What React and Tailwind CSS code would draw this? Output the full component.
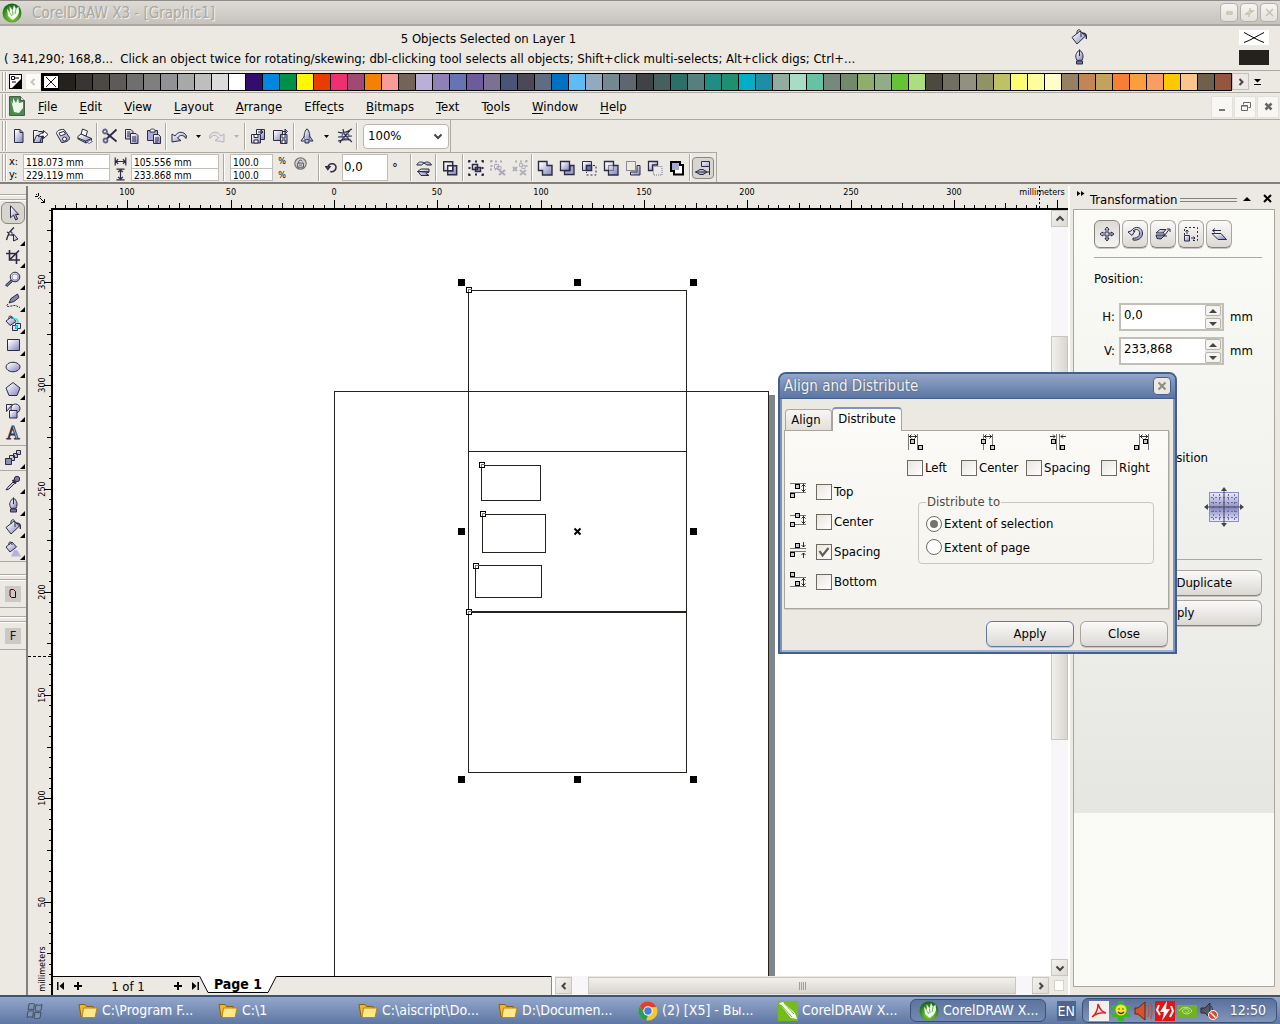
import { useState } from "react";

const palette = [
  "#25221e", "#3a3532", "#4c4845", "#5e5a58", "#6f6f6d", "#7f807e", "#919295", "#a8a8a6", "#bebebc", "#dadbda",
  "#ffffff", "#330c6f", "#0087e0", "#009148", "#fff800", "#eb3c00", "#f02e72", "#a14974", "#f48200", "#f99c97",
  "#736459", "#bab0d7", "#9080b5", "#6674b3", "#6f5a9d", "#7b7095", "#4a5477", "#4d4858", "#5f6c84", "#0072c4",
  "#5dbcf3", "#91aabf", "#748892", "#5e676f", "#3f4246", "#45605f", "#2a7069", "#577f7e", "#1f8d83", "#1e9070",
  "#00aec6", "#208ea2", "#91ad9f", "#a8dcc6", "#65c3a3", "#758a7c", "#73896b", "#8fad6b", "#90ae83", "#66c337",
  "#aade7f", "#4d493f", "#716f62", "#929180", "#919265", "#c0c166", "#fdfd71", "#fdfd9b", "#fffecb", "#967f62",
  "#c38554", "#c1a35e", "#f67e35", "#fa9f3c", "#f89e62", "#fec800", "#fcc58c", "#6f604b", "#955640",
];

const menus = [
  ["", "F", "ile"], ["", "E", "dit"], ["", "V", "iew"], ["", "L", "ayout"], ["", "A", "rrange"], ["Effe", "c", "ts"],
  ["", "B", "itmaps"], ["", "T", "ext"], ["T", "o", "ols"], ["", "W", "indow"], ["", "H", "elp"],
];

const INK = "#2b2b44";
const LAV = "url(#lav)";

// Small 16x16 glyphs used by the toolbars, toolbox and docker
const glyphs = {
  newDoc: <path d="M3.500 1.500h5.500l3 3v10h-8.500zM9 1.500v3h3" fill={LAV} stroke={INK} />,
  open: (
    <g fill={LAV} stroke={INK}>
      <path d="M.5 2.500h4l1 1h4v11h-9z" />
      <path d="M.5 14.500l3-7h5.500l-2 7z" />
      <path d="M5.500 9c1-3 2-4 5-4v-2.500l4.500 4-4.500 4V8c-2 0-3 .5-5 1z" fill="#fff" />
    </g>
  ),
  save: (
    <g fill={LAV} stroke={INK}>
      <path d="M1.500 5.500C1.500 3 5 1 9 1.500l5.500 8c.5 3-4 5-8 5z" />
      <path d="M4 5l5-1.500 1.500 2.500-5 2z" fill="#fff" />
      <circle cx="9.500" cy="11" r="2" fill="#fff" />
    </g>
  ),
  print: (
    <g fill={LAV} stroke={INK}>
      <path d="M4 6.500L5.500 1l5 2L9 8z" fill="#fff" />
      <path d="M.8 8.500L4 6l10.500 4.500v2L9 15l-8-4z" />
      <path d="M1 10l7.500 3 6-2.500M8.500 13v2" fill="none" />
      <path d="M10 14l2 1.500 3.500-2-2-1.500z" fill="#fff" stroke="#66668c" />
    </g>
  ),
  cut: (
    <g fill="none" stroke={INK} strokeWidth="1.800">
      <path d="M14.500 1.500L4.500 11M5 5.500l9.500 8" />
      <circle cx="3" cy="3.500" r="2" stroke="#62628c" />
      <circle cx="3.500" cy="12.500" r="2" stroke="#62628c" />
    </g>
  ),
  copy: (
    <g fill={LAV} stroke={INK}>
      <path d="M1.500 1.500h5.500l2 2v7.500h-7.500z" />
      <path d="M6.500 5.500h5.500l2 2v8h-7.500z" />
      <path d="M8 9h4M8 11h4M8 13h4M3 4h3M3 6h3M3 8h3" />
    </g>
  ),
  paste: (
    <g fill={LAV} stroke={INK}>
      <path d="M1.500 2.500h10v10h-10z" fill="#a9a9dc" />
      <path d="M4 2.500c0-2 5-2 5 0v1.500h-5z" fill="#fff" />
      <path d="M7.500 6.500h5l2 2v7h-7z" />
      <path d="M9 10h4M9 12h4M9 14h3" />
    </g>
  ),
  undo: <path d="M1 14v-8l3 2c3-5 9-5 11.500 0l-.5 2.500c-2.500-4-6-4-8.500-.5L10 12.500z" fill={LAV} stroke={INK} />,
  redo: <path d="M15 14v-8l-3 2C9 3 3 3 .5 8l.5 2.500c2.500-4 6-4 8.500-.5L6 12.500z" fill="#e4e3ea" stroke="#b5b3b8" />,
  import: (
    <g fill={LAV} stroke={INK}>
      <path d="M6.500 1.500h8v10h-8z" />
      <path d="M1.500 6.500h9v8.500h-9z" />
      <path d="M4 6.500h4v3h-4zM4 12h4v3h-4z" fill="#fff" />
      <path d="M8 4h4M11 2v4l2-2z" />
    </g>
  ),
  export: (
    <g fill={LAV} stroke={INK}>
      <path d="M1.500 2.500h9v10h-9z" />
      <path d="M8.500 6.500h6.500v9h-6.500z" />
      <path d="M10 7v3h3v-3M10 15v-3h3v3" fill="#fff" />
      <path d="M10 3.500h4M13 1v5l2.500-2.500z" />
    </g>
  ),
  launcher: (
    <g fill={LAV} stroke={INK}>
      <path d="M8 .8c3 3 3 6 2.500 11h-5C5 7 5 4 8 .8z" />
      <path d="M5.500 8L2 13h3.500M10.500 8L14 13h-3.500M6 12v3h4v-3" />
    </g>
  ),
  web: (
    <g fill="none" stroke={INK} strokeWidth="1.200">
      <path d="M1 4c5 2 9 0 14-3M1 9c5 0 9-1 14-1M3 15C5 10 11 6 14 1M6 1c0 5 4 9 9 13M1 13c4-1 9-2 13-1" />
      <path d="M5 7l3-3 4 3-2 4-4-1z" stroke="#62628c" />
    </g>
  ),
  widthDim: <path d="M1.500 3v10M14.500 3v10M2 8h12M5 5L2.500 8 5 11M11 5l2.500 3L11 11" fill="none" stroke={INK} strokeWidth="1.500" />,
  heightDim: <path d="M3 1.500h10M3 14.500h10M8 2v12M5 5l3-2.500L11 5M5 11l3 2.500 3-2.500" fill="none" stroke={INK} strokeWidth="1.500" />,
  lock: (
    <g>
      <circle cx="8" cy="8" r="7" fill="#d3d1cd" stroke="#77757a" strokeWidth="1.500" />
      <path d="M4.500 7.500h7v5h-7zM6 7.500v-2c0-2 4-2 4 0M6 10h4" fill="#eee" stroke={INK} />
    </g>
  ),
  rotate: <path d="M1 7h5L3.500 10.500zM4 8C3 3 12 1 13.500 7c.5 4-3 7-7 6" fill="none" stroke={INK} strokeWidth="1.800" />,
  mirrorH: (
    <g fill={LAV} stroke={INK}>
      <path d="M.8 5C2 2 5 1 8 3l-2.500 2zM8 3c3-2 6-1 7.500 2H11z" />
      <path d="M13 9H5l-3.500 2.500L13 12zM13 12l-11-.5L5 15.500h8l-3-2z" />
    </g>
  ),
  combine: (
    <g fill={LAV} stroke={INK} strokeWidth="1.400">
      <path d="M1.700 1.700h9v9h-9zM5.700 5.700h9v9h-9z" />
      <path d="M5.700 5.700h5v5h-5z" fill="#fff" />
    </g>
  ),
  group: (
    <g fill={LAV} stroke={INK}>
      <path d="M4.500 4.500h5v5h-5zM7.500 7.500h5v4h-5z" strokeWidth="1.500" />
      <path d="M0 1.500h16M0 14.500h16M1.500 0v16M14.500 0v16" strokeWidth="2" strokeDasharray="2 5" fill="none" />
    </g>
  ),
  ungroup: (
    <g stroke="#aaa8ba" fill="none">
      <path d="M0 1.500h13M1.500 0v10M0 9.500h6" strokeWidth="2" strokeDasharray="2 3" />
      <path d="M4.500 4.500h4v4h-4zM7 6.500h4v3h-4z" />
      <path d="M9 10l6 5M15 10l-6 5" strokeWidth="2" />
    </g>
  ),
  ungroupAll: (
    <g stroke="#b1afbc" fill="none">
      <path d="M3 1.500h13M14.500 0v10" strokeWidth="2" strokeDasharray="2 3" />
      <path d="M7.500 3.500h3v3h-3zM10 5.500h3v3h-3z" />
      <path d="M1 7l4 4M5 7l-4 4M8 10l6 5M14 10l-6 5" strokeWidth="2" />
    </g>
  ),
  weld: <path d="M1.500 1.500h8.500v4h5v9.500h-9.500v-4.500h-4z" fill={LAV} stroke={INK} strokeWidth="1.400" />,
  trim: (
    <g stroke={INK} strokeWidth="1.300">
      <path d="M5.500 10.500v4h9.500v-9h-4v5z" fill="#a3a3d3" />
      <path d="M1.500 1.500h9v9h-9z" fill={LAV} />
    </g>
  ),
  intersect: (
    <g stroke={INK} fill="none">
      <path d="M1.500 1.500h9v9h-9z" fill={LAV} />
      <path d="M5.500 5.500h5v5h-5z" fill="#7474ac" strokeWidth="1.500" />
      <path d="M12 5.500h3v9.500h-9.500v-3" strokeDasharray="2 2" />
    </g>
  ),
  simplify: (
    <g stroke={INK} fill={LAV}>
      <path d="M1.500 1.500h9v4h4.500v9.500h-9.500v-4.500h-4z" strokeWidth="1.300" />
      <path d="M5.500 5.500h5v5h-5z" fill="none" strokeDasharray="1 1" />
    </g>
  ),
  frontMinusBack: (
    <g stroke={INK} fill="none">
      <path d="M1.500 1.500h9v9h-9z" strokeDasharray="1 1" />
      <path d="M12 5.500h3v9.500h-9.500v-3h6.500z" fill={LAV} />
    </g>
  ),
  backMinusFront: (
    <g stroke={INK} fill="none">
      <path d="M1.500 1.500h9v3.500h-5v5.500h-4z" fill={LAV} strokeWidth="1.300" />
      <path d="M6.500 6.500h8.500v8.500h-8.500z" stroke="#77779b" strokeDasharray="1 1" />
    </g>
  ),
  outlineShape: (
    <g>
      <path d="M2 2h9v3h3v9.500h-9v-3.500h-3z" fill="#fff" stroke="#000" strokeWidth="2" />
      <path d="M3 3h7v7h-7z" fill="#a9a7d8" />
    </g>
  ),
  alignDist: (
    <g stroke={INK} fill={LAV}>
      <path d="M6.500 1.500h8v5h-8zM.8 12L5 9.500h3l4 2.500-4 2.500h-3z" />
      <path d="M14.500 6.500v8.500M0 12h14.500" fill="none" />
    </g>
  ),
  pick: <path d="M5.500 .8v12l3-2.800 2.200 5 2-1-2.200-4.500h3.300z" fill={LAV} stroke={INK} />,
  shape: (
    <g fill="none" stroke={INK}>
      <path d="M9 .5C5 4 2.500 9 1.500 13M2 5l7 4" strokeWidth="1.400" />
      <path d="M4 5h3v3h-3z" fill="#fff" />
      <path d="M8.500 7v7l4.500-2z" fill={LAV} />
    </g>
  ),
  crop: <path d="M4.500 1v10h10.500M1 4.500h10.500v10.500M14 1.500L4.500 11" fill="none" stroke={INK} strokeWidth="1.600" />,
  zoom: (
    <g stroke={INK}>
      <path d="M6 9l1.500 1.500L2 15.500.5 14z" fill="#77a" />
      <circle cx="10" cy="6" r="4.800" fill={LAV} />
      <circle cx="10" cy="6" r="3" fill="#f4f4ff" stroke="#9999c4" />
    </g>
  ),
  freehand: (
    <g fill={LAV} stroke={INK}>
      <path d="M12.500 1l1.500 3.500-5 4-5 1.500 2-4.500z" fill="#8585b0" />
      <path d="M3 11c-4 4 3 2 6 1.500s4 2 6 2" fill="none" strokeDasharray="2 1" />
    </g>
  ),
  smartFill: (
    <g stroke={INK}>
      <path d="M1 6l6-4.500 4 5-6 4z" fill={LAV} />
      <path d="M4 4c-1-4 3-4 3 0" fill="none" />
      <path d="M8 4c4-1 5 1 5 4" fill="none" stroke="#1ee" strokeWidth="1.500" />
      <path d="M7.500 10.500h5v5h-5zM10.500 8.500h5v5h-5z" fill="#ddf" />
      <path d="M10.500 10.500h2v3h-2z" fill="#0ff" stroke="#0cc" />
    </g>
  ),
  rect: <path d="M2.500 2.500h12v11h-12z" fill={LAV} stroke={INK} />,
  ellipse: <ellipse cx="8" cy="8" rx="7" ry="4.800" fill={LAV} stroke={INK} />,
  polygon: <path d="M8 1.500L15 7l-3 7.500H4L1 7z" fill={LAV} stroke={INK} />,
  shapes: (
    <g fill={LAV} stroke={INK}>
      <path d="M1.500 1.500h6l-6 7z" />
      <circle cx="10.500" cy="5.500" r="4.500" />
      <path d="M4.500 7.500h7.500v7.500h-7.500z" />
    </g>
  ),
  blend: (
    <g fill={LAV} stroke={INK}>
      <path d="M11.500 .5h4v4h-4zM8.500 3.500h4v4h-4zM4.500 5.500h5v5h-5z" />
      <path d="M.5 8.500h6v6h-6z" fill="#8d8dbb" />
    </g>
  ),
  dropper: (
    <g stroke={INK} fill={LAV}>
      <path d="M1 15l1.500-2.500L8 7l1.500 1.500L4 14z" />
      <circle cx="12" cy="4" r="2.700" fill="#77a" />
      <path d="M7.500 5L11 8.500" strokeWidth="2" />
    </g>
  ),
  pen: (
    <g stroke={INK} fill={LAV}>
      <path d="M8.500 .8c3.500 3 4.500 6 2.500 10.500H6C3.500 7 5 4 8.500.8z" />
      <path d="M8.500 1v6" />
      <path d="M5.500 12h6v3h-6z" fill="#77a" />
    </g>
  ),
  bucket: (
    <g stroke={INK} fill={LAV}>
      <path d="M1 8.500L9 2l5.500 5-8.500 8z" />
      <path d="M6 5c-1-5 4-6 4-1v4" fill="none" />
      <path d="M11 4c4 0 4.500 2 4.500 6" fill="none" strokeWidth="1.500" />
    </g>
  ),
  interFill: (
    <g stroke={INK} fill={LAV}>
      <path d="M1 6l6-5 4.500 5-6.500 5z" />
      <path d="M4 4c-1-4 3-4 3 0" fill="none" />
      <path d="M9 9h3l4 6.500H6z" fill="#b3b3e0" stroke="none" />
    </g>
  ),
  move: <path d="M8 1l2 2.500H9v3.500h3.500V6L15 8l-2.500 2V9H9v3.500h1L8 15l-2-2.500h1V9H3.500v1L1 8l2.500-2v1H7V3.500H6z" fill={LAV} stroke={INK} />,
  turn: <path d="M1 6l4 3.500L8 5H6c5-4 8 1 6 4.500-1 2-4 3-6 2.500v2c5 1 9-2 9.500-6C16 1 8-1 4 5z" fill={LAV} stroke={INK} />,
  scale: (
    <g fill={LAV} stroke={INK}>
      <path d="M5 3.500h6L8 7H1z" />
      <path d="M1 9h9l-4 4-4-.5z" fill="#8989bd" />
      <path d="M9.500 9.500L14 3.500M12 3h3v3M9 7v3h3" fill="none" />
    </g>
  ),
  size: (
    <g stroke={INK} fill="none">
      <path d="M1.500 9V1.500h13v13H9" strokeDasharray="2 2" />
      <path d="M1.500 9.500h5v5.500h-5z" fill={LAV} />
      <path d="M4 8V4M2.500 5.500L4 4l1.500 1.500M8 12h4M10.500 10.500L12 12l-1.500 1.500" />
    </g>
  ),
  skew: (
    <g fill={LAV} stroke={INK}>
      <path d="M1 7.500h9l5.500 6H7z" />
      <path d="M10 4.500H2M4 2.500L1.500 4.500 4 6.500" fill="none" />
    </g>
  ),
};

function Glyph({ name, className = "h-4 w-4" }) {
  return (
    <svg viewBox="0 0 16 16" className={`block shrink-0 ${className}`} aria-hidden="true">
      {glyphs[name]}
    </svg>
  );
}

function ToolButton({ name, className = "w-[22px]" }) {
  return (
    <button aria-label={name} className={`flex h-[22px] shrink-0 items-center justify-center ${className}`}>
      <Glyph name={name} />
    </button>
  );
}

function Sep() {
  return <div className="h-[27px] w-[2px] shrink-0 border-r border-white bg-[#aca9a3]" />;
}

function Grip() {
  return (
    <div className="flex shrink-0 gap-px self-stretch py-px pl-[2px]">
      <div className="w-[2px] border-r border-white bg-[#aca9a3]" />
      <div className="w-[2px] border-r border-white bg-[#aca9a3]" />
    </div>
  );
}

function Caret({ className = "text-black" }) {
  return (
    <button aria-label="More" className={`flex h-[22px] w-4 items-center justify-center ${className}`}>
      <svg viewBox="0 0 5 3" className="h-[3px] w-[5px]"><path d="M0 0h5L2.500 3z" fill="currentColor" /></svg>
    </button>
  );
}

function Chevron({ dir, className = "" }) {
  const d = {
    left: "M6.500 2L3.500 5l3 3",
    right: "M3.500 2l3 3-3 3",
    up: "M1.500 6.500L5 3l3.500 3.500",
    down: "M1.500 3.500L5 7l3.500-3.500",
  }[dir];
  return (
    <svg viewBox="0 0 10 10" className={`h-[10px] w-[10px] ${className}`}>
      <path d={d} fill="none" stroke="currentColor" strokeWidth="2" />
    </svg>
  );
}

function Logo({ className = "h-5 w-5" }) {
  return (
    <svg viewBox="0 0 20 20" className={`block shrink-0 ${className}`}>
      <circle cx="10" cy="10" r="9.500" fill="url(#ball)" />
      <path d="M5 5.500l3 4.500L7.500 3l3 4.500L12 2l2 4 2.500-2.500L17 8c0 4-3 7-6.500 9L6 13z" fill="#fff" opacity=".93" />
      <path d="M8 10l2 3M10.500 7.500L11 12M14 6l-1 5" stroke="#4da32f" strokeWidth=".8" fill="none" />
    </svg>
  );
}

function TitleBar() {
  return (
    <header className="flex h-[26px] items-center border-t border-b-2 border-t-[#8f8c87] border-b-[#aca8a1] bg-linear-to-b from-[#dedbd6] to-[#c6c3bd] pr-0.5 pl-0.5">
      <Logo />
      <h1 className="flex-1 pt-px pl-[10px] text-[15px] text-[#aaa7a1] [text-shadow:1px_1px_0_#f2f0ec]">CorelDRAW X3 - [Graphic1]</h1>
      <div className="flex gap-[2px]">
        {["M3 5h5v2h-5z", "M6 1v3h3l-4 3v3L5 7H2l4-3z", "M2 2l7 7M9 2l-7 7"].map((d, i) => (
          <button key={i} aria-label={["Minimize", "Restore", "Close"][i]} className="flex h-[19px] w-[18px] items-center justify-center rounded border border-[#b3b0a9] bg-linear-to-b from-[#f7f6f2] to-[#e2e0da]">
            <svg viewBox="0 0 11 11" className="h-[11px] w-[11px]"><path d={d} fill="#fff" stroke="#c3bfaa" strokeWidth="1.300" /></svg>
          </button>
        ))}
      </div>
    </header>
  );
}

function StatusBar() {
  return (
    <section className="grid h-[44px] grid-cols-[977fr_204fr_99fr] text-[13px]">
      <div className="flex flex-col pt-[3px]">
        <p className="h-5 text-center leading-5">5 Objects Selected on Layer 1</p>
        <p className="h-5 pl-1 leading-5 whitespace-pre">( 341,290; 168,8...  Click an object twice for rotating/skewing; dbl-clicking tool selects all objects; Shift+click multi-selects; Alt+click digs; Ctrl+...</p>
      </div>
      <div className="flex flex-col items-center gap-1 pt-[3px]">
        <Glyph name="bucket" />
        <Glyph name="pen" />
      </div>
      <div className="flex flex-col items-end gap-[5px] pt-1 pr-[11px]">
        <svg viewBox="0 0 30 15" className="h-[15px] w-[30px] bg-white"><path d="M5 2.500c6 3 14 8 20 10M25 2.500c-6 3-14 8-20 10" fill="none" stroke="#000" /></svg>
        <div className="h-[15px] w-[30px] bg-[#25221e]" />
      </div>
    </section>
  );
}

function ColorBar() {
  return (
    <section className="flex h-[23px] items-center border-t border-b border-[#aca9a3]">
      <Grip />
      <button aria-label="Palette options" className="ml-[2px] h-[15px] w-[13px] shrink-0 border border-black bg-white">
        <svg viewBox="0 0 11 13"><path d="M11 4v9H2z" /><path d="M1.500 1.500h3v3h-3zM5 3h4M2 7h4" fill="none" stroke="#000" /></svg>
      </button>
      <button aria-label="Scroll left" className="ml-[3px] flex h-[17px] w-4 shrink-0 items-center justify-center border border-[#ece9e2] bg-[#fdfcf8] text-[#c9c6c0]">
        <Chevron dir="left" className="h-2 w-2" />
      </button>
      <div className="flex h-[18px] overflow-hidden border-y border-l border-black">
        <button aria-label="No color" className="w-[17px] shrink-0 border-2 border-r border-black bg-white">
          <svg viewBox="0 0 13 13" className="h-full w-full"><path d="M1 1l11 11M12 1L1 12" stroke="#000" /></svg>
        </button>
        {palette.map((c) => (
          <button key={c} aria-label={c} className="w-[17px] shrink-0 border-r border-black" style={{ backgroundColor: c }} />
        ))}
      </div>
      <button aria-label="Scroll right" className="flex h-[17px] w-[17px] shrink-0 items-center justify-center border border-[#c3c0ba] bg-[#eceae6] text-[#444]">
        <Chevron dir="right" />
      </button>
      <button aria-label="Expand palette" className="ml-[5px] shrink-0">
        <svg viewBox="0 0 7 6" className="h-[6px] w-[7px]"><path d="M0 0h7L3.500 3.500zM0 5h7v1H0z" /></svg>
      </button>
    </section>
  );
}

function MenuBar() {
  return (
    <nav className="flex h-[27px] items-center border-b border-[#aca9a3]">
      <Grip />
      <svg viewBox="0 0 16 20" className="ml-[2px] h-5 w-4 shrink-0">
        <path d="M.5.5h11l4 4v15H.5z" fill="#4c8a52" stroke="#4c5a4c" />
        <path d="M11.500 .5v4h4" fill="#ddd" stroke="#4c5a4c" />
        <path d="M2 4l2 4 0-6 3 5 2-5 1 5 4-1v6l-4 5-5-1z" fill="#eef8ea" />
      </svg>
      <ul className="flex flex-1 gap-[22px] pt-[2px] pl-[13px] text-[13px]">
        {menus.map(([a, b, c]) => (
          <li key={a + b + c}>
            <button>{a}<span className="underline underline-offset-2">{b}</span>{c}</button>
          </li>
        ))}
      </ul>
      <div className="flex gap-px pt-px pr-px">
        {["M2 8h6v2H2z", "M3.500 1.500h7v5h-2M3.500 1.500v2M1.500 4.500h6v5h-6zM1 5h7", "M2.500 2.500l6 6M8.500 2.500l-6 6"].map((d, i) => (
          <button key={i} aria-label={["Minimize document", "Restore document", "Close document"][i]} className="flex h-[22px] w-[22px] items-center justify-center border border-[#e3e1dc] bg-[#f8f7f3]">
            <svg viewBox="0 0 11 11" className="h-[11px] w-[11px]"><path d={d} fill={i === 0 ? "#777" : "none"} stroke={i === 0 ? "none" : "#666"} strokeWidth={i === 2 ? 2.5 : 1} /></svg>
          </button>
        ))}
      </div>
    </nav>
  );
}

function StandardBar() {
  return (
    <section className="flex h-[32px]">
      <div className="flex items-center border-r border-[#aca9a3] pr-[1px]">
        <Grip />
        <div className="flex items-center pl-px">
          <ToolButton name="newDoc" />
          <ToolButton name="open" />
          <ToolButton name="save" />
          <ToolButton name="print" />
        </div>
        <Sep />
        <div className="flex items-center pl-px">
          <ToolButton name="cut" />
          <ToolButton name="copy" />
          <ToolButton name="paste" />
        </div>
        <Sep />
        <div className="flex items-center pl-px">
          <ToolButton name="undo" />
          <Caret />
          <ToolButton name="redo" />
          <Caret className="text-[#b5b3ae]" />
        </div>
        <Sep />
        <div className="flex items-center pr-[2px] pl-px">
          <ToolButton name="import" />
          <ToolButton name="export" />
        </div>
        <Sep />
        <div className="flex items-center pl-px">
          <ToolButton name="launcher" />
          <Caret />
          <ToolButton name="web" />
        </div>
        <Sep />
        <div className="ml-[5px] grid h-[25px] w-[86px] items-center rounded border border-[#bab7b0] bg-white">
          <select aria-label="Zoom level" className="col-start-1 row-start-1 h-full w-full appearance-none bg-transparent pl-1 text-[13px] outline-none">
            <option>100%</option>
          </select>
          <Chevron dir="down" className="pointer-events-none col-start-1 row-start-1 mr-[5px] justify-self-end text-[#444]" />
        </div>
      </div>
    </section>
  );
}

function NumField({ label, value, className }) {
  return (
    <input aria-label={label} defaultValue={value} className={`block border border-[#c2bfb8] bg-white px-[2px] pt-[2px] text-[10px] leading-[10px] outline-none ${className}`} />
  );
}

function PropertyBar() {
  return (
    <section className="flex h-[32px] border-b-2 border-[#84817c]">
      <div className="flex items-center border-t border-r border-[#aca9a3] pr-[2px]">
        <Grip />
        <div className="ml-[2px] flex w-[14px] flex-col text-[11px] leading-[13px]">
          <span>x:</span>
          <span>y:</span>
        </div>
        <div className="flex flex-col">
          <NumField label="X position" value="118.073 mm" className="h-[14px] w-[87px] border-b-0" />
          <NumField label="Y position" value="229.119 mm" className="h-[13px] w-[87px]" />
        </div>
        <div className="flex w-[21px] flex-col items-center">
          <Glyph name="widthDim" className="h-[13px] w-[13px]" />
          <Glyph name="heightDim" className="h-[13px] w-[13px]" />
        </div>
        <div className="flex flex-col">
          <NumField label="Object width" value="105.556 mm" className="h-[14px] w-[88px] border-b-0" />
          <NumField label="Object height" value="233.868 mm" className="h-[13px] w-[88px]" />
        </div>
        <div className="pr-[5px] pl-1"><Sep /></div>
        <div className="flex flex-col">
          <NumField label="Scale width" value="100.0" className="h-[14px] w-[43px] border-b-0" />
          <NumField label="Scale height" value="100.0" className="h-[13px] w-[43px]" />
        </div>
        <div className="flex w-[18px] flex-col items-center text-[9px] leading-[14px]">
          <span>%</span>
          <span>%</span>
        </div>
        <button aria-label="Lock ratio" className="mb-2 w-[27px] pl-[3px]"><Glyph name="lock" className="h-[13px] w-[13px]" /></button>
        <Sep />
        <label htmlFor="angle" aria-label="Rotation angle" className="flex w-[22px] justify-center"><Glyph name="rotate" className="h-[13px] w-[13px]" /></label>
        <input id="angle" defaultValue="0,0" className="h-[27px] w-[46px] border border-[#c2bfb8] bg-white px-px pb-[3px] text-[13px] outline-none" />
        <span className="w-[22px] pl-1 text-[13px]">°</span>
        <Sep />
        <ToolButton name="mirrorH" className="w-[23px]" />
        <Sep />
        <ToolButton name="combine" className="w-[25px]" />
        <Sep />
        <ToolButton name="group" className="w-[23px]" />
        <ToolButton name="ungroup" />
        <ToolButton name="ungroupAll" />
        <Sep />
        <ToolButton name="weld" className="w-[23px]" />
        <ToolButton name="trim" />
        <ToolButton name="intersect" />
        <ToolButton name="simplify" />
        <ToolButton name="frontMinusBack" />
        <ToolButton name="backMinusFront" />
        <ToolButton name="outlineShape" />
        <div className="px-px"><Sep /></div>
        <ToolButton name="alignDist" className="w-[22px] rounded border border-[#8b8883] bg-[#d8d5cf]" />
      </div>
    </section>
  );
}

function HGrip({ className = "" }) {
  return (
    <div className={`flex h-[7px] w-full shrink-0 flex-col justify-between ${className}`}>
      <div className="h-[2px] border-b border-white bg-[#aca9a3]" />
      <div className="h-[2px] border-b border-white bg-[#aca9a3]" />
    </div>
  );
}

function Toolbox() {
  const groups = [
    ["pick", "shape", "crop", "zoom", "freehand", "smartFill", "rect", "ellipse", "polygon", "shapes", "text"],
    ["blend"],
    ["dropper", "pen", "bucket", "interFill"],
  ];
  return (
    <aside className="flex w-[26px] shrink-0 flex-col items-center pt-2">
      <HGrip />
      <div className="flex w-full flex-col gap-px pt-px pb-px">
        {groups.map((g, i) => (
          <div key={i} className={`flex flex-col items-center ${i ? "border-t border-[#aca9a3] pt-px" : ""}`}>
            {g.map((name) => (
              <button
                key={name}
                aria-label={name}
                className={`grid h-[22px] w-[24px] place-items-center rounded-md ${name === "pick" ? "border border-[#8b8883] bg-[#d8d5cf]" : ""}`}
              >
                {name === "text" ? (
                  <span className="col-start-1 row-start-1 font-['Liberation_Serif',serif] text-[18px] leading-none text-[#e4e4f6] [-webkit-text-stroke:1px_#34344f]">A</span>
                ) : (
                  <Glyph name={name} className="col-start-1 row-start-1 h-4 w-4" />
                )}
                {name !== "pick" && name !== "text" && (
                  <svg viewBox="0 0 5 5" className="col-start-1 row-start-1 h-[5px] w-[5px] self-end justify-self-end"><path d="M5 0v5H0z" /></svg>
                )}
              </button>
            ))}
          </div>
        ))}
      </div>
      <div className="w-full border-b border-[#aca9a3]" />
      <HGrip className="mt-3" />
      <button aria-label="Script Q" className="my-[5px] flex h-4 w-4 items-center justify-center bg-[#cbc9c6]">
        <svg viewBox="0 0 10 12" className="h-3 w-[10px]"><path d="M2.500 1.500h3l2 2v6h-4l-1.500-1.500v-5z" fill="none" stroke="#400" /></svg>
      </button>
      <div className="w-full border-b border-[#aca9a3]" />
      <HGrip className="mt-2" />
      <button aria-label="Script F" className="my-[5px] h-4 w-4 bg-[#cbc9c6] text-[13px] leading-4 text-[#400]">F</button>
      <div className="w-full border-b border-[#aca9a3]" />
    </aside>
  );
}

const MM = 2.066;

// 5mm ticks with longer marks every 25 and 50
function tickLength(mm) {
  if (mm % 50 === 0) return 8;
  return mm % 25 === 0 ? 5 : 3;
}

function TopRuler() {
  const marks = [];
  for (let mm = -135; mm <= 350; mm += 5) marks.push(mm);
  return (
    <svg className="block h-[24px] w-full" shapeRendering="crispEdges">
      {marks.map((mm) => {
        const x = Math.round(283 + mm * MM);
        const len = tickLength(mm);
        return (
          <g key={mm}>
            <rect x={x} y={22 - len} width="1" height={len} />
            {mm % 50 === 0 && mm < 350 && <text x={x} y="9" textAnchor="middle" fontSize="9">{Math.abs(mm)}</text>}
          </g>
        );
      })}
      <text x="991" y="9" textAnchor="middle" fontSize="9">millimeters</text>
      <path d="M988.500 0v22" stroke="#000" strokeDasharray="2 2" />
      <rect x="0" y="22" width="100%" height="2" />
    </svg>
  );
}

function SideRuler() {
  const marks = [];
  for (let mm = 10; mm <= 385; mm += 5) marks.push(mm);
  return (
    <svg className="block h-full w-[25px] shrink-0" shapeRendering="crispEdges">
      {marks.map((mm) => {
        const y = Math.round(795 - mm * MM);
        const len = tickLength(mm) - 1;
        return (
          <g key={mm}>
            <rect x={23 - len} y={y} width={len} height="1" />
            {mm % 50 === 0 && <text transform={`translate(17 ${y}) rotate(-90)`} textAnchor="middle" fontSize="9">{mm}</text>}
          </g>
        );
      })}
      <text transform="translate(17 759) rotate(-90)" textAnchor="middle" fontSize="9">millimeters</text>
      <path d="M0 446.500h23" stroke="#000" strokeDasharray="3 2" />
      <rect x="23" y="0" width="2" height="100%" />
    </svg>
  );
}

function Drawing() {
  const handles = [[458, 279], [574, 279], [690, 279], [458, 528], [690, 528], [458, 776], [574, 776], [690, 776]];
  const nodes = [[466, 287], [479, 462], [480, 511], [473, 563], [466, 609]];
  return (
    <svg className="block h-full min-h-0 w-full flex-1" shapeRendering="crispEdges">
      <g transform="translate(-53 -210)" fill="none" stroke="#25221e">
        <rect x="769" y="395" width="6" height="700" fill="#7f858d" stroke="none" />
        <path d="M334.500 1100V391.500h434V1100" />
        <rect x="468.500" y="290.500" width="218" height="482" />
        <path d="M468 451.500h218" />
        <path d="M468 612h218" strokeWidth="2" />
        <rect x="481.500" y="465.500" width="59" height="35" />
        <rect x="482.500" y="514.500" width="63" height="38" />
        <rect x="475.500" y="565.500" width="66" height="32" />
        {nodes.map(([x, y]) => (
          <g key={`${x}-${y}`}>
            <rect x={x + 0.5} y={y + 0.5} width="5" height="5" fill="#fff" stroke="#000" />
            <path d={`M${x + 2.5} ${y + 5}v-2.500h3`} stroke="#777" />
          </g>
        ))}
        {handles.map(([x, y]) => (
          <rect key={`${x}-${y}`} x={x} y={y} width="7" height="7" fill="#000" stroke="none" />
        ))}
        <path d="M574.500 528.500l6 6M580.500 528.500l-6 6" stroke="#000" strokeWidth="2" shapeRendering="auto" />
      </g>
    </svg>
  );
}

function ScrollButton({ dir, className = "" }) {
  return (
    <button aria-label={`Scroll ${dir}`} className={`flex h-[17px] w-[17px] shrink-0 items-center justify-center border border-[#c9c6c0] bg-linear-to-br from-[#f4f2ef] to-[#dddad5] text-[#444] ${className}`}>
      <Chevron dir={dir} />
    </button>
  );
}

function PageTabs() {
  return (
    <div className="flex h-[19px] shrink-0">
      <div className="flex w-1/2 max-w-[498px] items-stretch border-t border-black">
        <div className="flex w-[146px] items-center gap-[9px] pl-1">
          <button aria-label="First page"><svg viewBox="0 0 8 8" className="h-2 w-2"><path d="M0 0h1.500v8H0zM7 0v8L2.500 4z" /></svg></button>
          <button aria-label="Add page before"><svg viewBox="0 0 8 8" className="h-2 w-2"><path d="M3 0h2v3h3v2H5v3H3V5H0V3h3z" /></svg></button>
          <span className="flex-1 text-center text-[13px] leading-none">1 of 1</span>
          <button aria-label="Add page after"><svg viewBox="0 0 8 8" className="h-2 w-2"><path d="M3 0h2v3h3v2H5v3H3V5H0V3h3z" /></svg></button>
          <button aria-label="Last page"><svg viewBox="0 0 8 8" className="h-2 w-2"><path d="M6.500 0H8v8H6.500zM1 0v8l4.500-4z" /></svg></button>
        </div>
        <div className="-mt-px flex">
          <svg viewBox="0 0 9 17" className="h-[17px] w-[9px]"><path d="M0 0h9v17z" fill="#fff" /><path d="M.5 0L9 16.500" stroke="#000" /></svg>
          <button className="h-[17px] border-b border-black bg-white px-[6px] text-[14px] leading-4 font-bold">Page 1</button>
          <svg viewBox="0 0 9 17" className="h-[17px] w-[9px]"><path d="M0 0h9L0 17z" fill="#fff" /><path d="M8.500 0L0 16.500" stroke="#000" /></svg>
        </div>
      </div>
      <div className="flex flex-1 items-center border-l border-[#8b8883]">
        <div className="h-full w-[3px] bg-white" />
        <ScrollButton dir="left" />
        <div className="h-full w-4 bg-[#f8f6f8]" />
        <div className="flex h-[17px] flex-1 items-center justify-center gap-px border border-[#c9c6c0] bg-linear-to-b from-[#f2f0ed] to-[#d9d6d1]">
          {[0, 1, 2, 3].map((i) => <div key={i} className="h-2 w-px bg-[#a19e99]" />)}
        </div>
        <div className="h-full w-4 bg-[#f8f6f8]" />
        <ScrollButton dir="right" />
        <div className="mr-1 ml-[5px] h-[11px] w-[10px] border border-[#d5d2cc] bg-white" />
      </div>
    </div>
  );
}

function Workspace() {
  return (
    <main className="flex min-w-0 flex-1 flex-col border-l-2 border-[#84817c]">
      <div className="flex h-[24px] shrink-0">
        <div className="flex w-[23px] items-center justify-center">
          <svg viewBox="0 0 10 10" className="h-[10px] w-[10px]" fill="none" stroke="#000"><path d="M3.500 0v3M0 3.500h3M5 3.500h1M3.500 5v1M1 1l1 1M4.500 4.500l5 5M9.500 6v3.500H6" /></svg>
        </div>
        <div className="min-w-0 flex-1"><TopRuler /></div>
      </div>
      <div className="flex min-h-0 flex-1">
        <SideRuler />
        <div className="flex min-w-0 flex-1 flex-col">
          <div className="flex min-h-0 flex-1">
            <div className="flex min-w-0 flex-1 bg-white"><Drawing /></div>
            <div className="flex w-[17px] shrink-0 flex-col">
              <ScrollButton dir="up" />
              <div className="flex-[109] bg-[#f8f6f8]" />
              <div className="flex-[403] border border-[#c9c6c0] bg-linear-to-r from-[#f2f0ed] to-[#d9d6d1]" />
              <div className="flex-[220] bg-[#f8f6f8]" />
              <ScrollButton dir="down" />
            </div>
          </div>
          <PageTabs />
        </div>
      </div>
    </main>
  );
}

function SpinField({ id, label, value }) {
  return (
    <div className="flex h-7 items-center text-[13px]">
      <label htmlFor={id} className="w-[25px] pr-1 text-right">{label}</label>
      <div className="flex h-7 w-[105px] border-2 border-[#c2bfb8] bg-white">
        <input id={id} defaultValue={value} className="w-0 flex-1 pb-[5px] pl-[3px] outline-none" />
        <div className="flex flex-col justify-center gap-[2px] bg-[#eae8e3] pr-px">
          {["M0 4h8L4 0z", "M0 0h8L4 4z"].map((d, i) => (
            <button key={i} aria-label={`${label} ${i ? "down" : "up"}`} className="flex h-[11px] w-4 items-center justify-center rounded-xs border border-[#b7b4ae] bg-[#f5f4f1]">
              <svg viewBox="0 0 8 4" className="h-1 w-2"><path d={d} fill="#444" /></svg>
            </button>
          ))}
        </div>
      </div>
      <span className="pl-[6px]">mm</span>
    </div>
  );
}

const buttonShape = "rounded-md border text-[13px] shadow-[0_1px_0_#c8c5bf]";
const buttonFace = `${buttonShape} border-[#a9a6a0] border-b-[#85827d] bg-linear-to-b from-[#fbfaf9] to-[#dbd8d4]`;
const buttonPressed = `${buttonShape} border-[#85827d] bg-linear-to-b from-[#dddad5] to-[#f5f4f1]`;
const buttonDefault = `${buttonShape} border-[#5f79a5] bg-linear-to-b from-[#fbfaf9] to-[#dbd8d4]`;

function Docker() {
  return (
    <aside className="flex w-[212px] shrink-0 flex-col border-l-2 border-white pr-[5px] pb-2 pl-[3px]">
      <div className="flex h-[23px] items-center">
        <svg viewBox="0 0 8 5" className="mb-2 ml-1 h-[5px] w-2"><path d="M0 0l3.500 2.500L0 5zM4 0l3.500 2.500L4 5z" /></svg>
        <h2 className="pt-1 pl-[5px] text-[13px]">Transformation</h2>
        <div className="mt-1 ml-0.5 flex h-1 flex-1 flex-col justify-between">
          <div className="border-b border-[#84817c]" />
          <div className="border-b border-[#84817c]" />
        </div>
        <button aria-label="Roll up" className="mt-[2px] ml-[6px]"><svg viewBox="0 0 8 4" className="h-1 w-2"><path d="M4 0l4 4H0z" /></svg></button>
        <button aria-label="Close docker" className="mt-[2px] mr-[3px] ml-3"><svg viewBox="0 0 9 9" className="h-[9px] w-[9px]"><path d="M1 1l7 7M8 1L1 8" stroke="#000" strokeWidth="2" /></svg></button>
      </div>
      <div className="flex flex-1 flex-col border border-[#aca59b] bg-[#fafaf6]">
        <div className="flex h-[603px] flex-col bg-linear-to-b from-[#fbfbf7] to-[#e6e6e2] pt-[10px] pr-3 pl-[20px]">
          <div className="flex gap-[2px]">
            {["move", "turn", "scale", "size", "skew"].map((n, i) => (
              <button key={n} aria-label={n} className={`flex h-7 w-[26px] items-center justify-center ${i === 0 ? buttonPressed : buttonFace}`}>
                <Glyph name={n} />
              </button>
            ))}
          </div>
          <div className="mt-[9px] border-b border-[#aca9a3]" />
          <p className="mt-[11px] text-[13px] leading-5">Position:</p>
          <div className="mt-[14px] flex flex-col gap-[6px]">
            <SpinField id="pos-h" label="H:" value="0,0" />
            <SpinField id="pos-v" label="V:" value="233,868" />
          </div>
          <label className="mt-[83px] flex h-5 w-[114px] items-center justify-end gap-1 text-[13px] whitespace-nowrap">
            <input type="checkbox" className="size-4" />Relative position
          </label>
          <div className="mt-[19px] flex justify-end pr-[18px]">
            <svg viewBox="0 0 40 40" className="h-10 w-10">
              <rect x="5.500" y="5.500" width="29" height="29" fill="url(#grid)" stroke="#8c8cc0" />
              <path d="M7 10.500h26M7 15.500h26M7 24.500h26M7 30.500h26M9.500 7v26M15.500 7v26M24.500 7v26M30.500 7v26" stroke="#6d6da5" strokeDasharray="2 2" />
              <path d="M20 2v36M2 20h36" stroke="#444450" />
              <path d="M20 0l3 4h-6zM20 40l3-4h-6zM0 20l4-3v6zM40 20l-4-3v6z" fill="#444450" />
            </svg>
          </div>
          <div className="mt-8 border-b border-[#aca9a3]" />
          <button className={`mt-[10px] h-[26px] ${buttonFace}`}>Apply To Duplicate</button>
          <button className={`mt-1 h-[26px] ${buttonFace}`}>Apply</button>
        </div>
      </div>
    </aside>
  );
}

function Check({ label, value, onChange }) {
  return (
    <label className="flex items-center gap-[2px] text-[13px] leading-[18px]">
      <span className="grid h-4 w-4 place-items-center">
        <input type="checkbox" checked={value} onChange={onChange} className="peer col-start-1 row-start-1 h-4 w-4 appearance-none border border-[#6c6a61] bg-linear-to-br from-[#e9e4df] to-white" />
        <svg viewBox="0 0 12 12" className="pointer-events-none col-start-1 row-start-1 hidden h-3 w-3 peer-checked:block"><path d="M1.500 5l3 4.500L10.500 2" fill="none" stroke="#5f5c54" strokeWidth="2.200" /></svg>
      </span>
      {label}
    </label>
  );
}

function Radio({ label, ...props }) {
  return (
    <label className="flex items-center gap-[2px] text-[13px]">
      <span className="grid h-4 w-4 place-items-center">
        <input type="radio" name="extent" className="peer col-start-1 row-start-1 h-4 w-4 appearance-none rounded-full border border-[#6c6a61] bg-white" {...props} />
        <span className="pointer-events-none col-start-1 row-start-1 hidden h-2 w-2 rounded-full bg-[#77736b] peer-checked:block" />
      </span>
      {label}
    </label>
  );
}

// guide lines, squares and arrow heads of the distribute icons
const distIcons = {
  left: { lines: "M1.500 0v16M10.500 0v16", boxes: [[3, 5], [11, 11]], arrows: "M2 2.500h8M4.500 .5L2.500 2.500l2 2M7.500 .5l2 2-2 2" },
  hCenter: { lines: "M3.500 0v16M12.500 0v16", boxes: [[1, 5], [10, 11]], arrows: "M4 2.500h8M6.500 .5l-2 2 2 2M9.500 .5l2 2-2 2" },
  hSpacing: { lines: "M6.500 0v16M9.500 0v16", boxes: [[1, 5], [10, 11]], arrows: "M0 2.500h5M3 .5l2 2-2 2M16 2.500h-5M13 .5l-2 2 2 2" },
  right: { lines: "M6.500 0v16M15.500 0v16", boxes: [[1, 11], [10, 5]], arrows: "M7 2.500h8M9.500 .5l-2 2 2 2M12.500 .5l2 2-2 2" },
  top: { lines: "M0 1.500h16M0 10.500h16", boxes: [[5, 2], [0, 11]], arrows: "M13.500 2v8M11.500 4.500l2-2 2 2M11.500 7.500l2 2 2-2" },
  vCenter: { lines: "M0 3.500h16M0 12.500h16", boxes: [[5, 1], [0, 10]], arrows: "M13.500 4v8M11.500 6.500l2-2 2 2M11.500 9.500l2 2 2-2" },
  vSpacing: { lines: "M0 6.500h16M0 9.500h16", boxes: [[5, 1], [0, 10]], arrows: "M13.500 0v5M11.500 3l2 2 2-2M13.500 16v-5M11.500 13l2-2 2 2" },
  bottom: { lines: "M0 5.500h16M0 14.500h16", boxes: [[0, 0], [5, 9]], arrows: "M13.500 6v8M11.500 8.500l2-2 2 2M11.500 11.500l2 2 2-2" },
};

function DistIcon({ name }) {
  const { lines, boxes, arrows } = distIcons[name];
  return (
    <svg viewBox="0 0 16 16" className="h-4 w-4 shrink-0" fill="none">
      <path d={lines} stroke="#777" />
      <path d={arrows} stroke="#000" strokeWidth=".8" />
      {boxes.map(([x, y]) => (
        <rect key={x} x={x + 0.5} y={y + 0.5} width="4" height="4" fill="#c9c9d0" stroke="#000" />
      ))}
    </svg>
  );
}

function AlignDialog() {
  const [state, setState] = useState({ vSpacing: true });
  const toggle = (k) => setState((s) => ({ ...s, [k]: !s[k] }));
  const cols = [
    ["left", "Left", "w-[54px]", ""],
    ["hCenter", "Center", "w-[65px]", "self-center pr-3"],
    ["hSpacing", "Spacing", "w-[75px]", "self-center pr-3"],
    ["right", "Right", "w-[54px]", "self-end pr-[6px]"],
  ];
  const rows = [["top", "Top"], ["vCenter", "Center"], ["vSpacing", "Spacing"], ["bottom", "Bottom"]];

  return (
    <div role="dialog" aria-label="Align and Distribute" className="absolute top-[372px] left-[778px] flex w-[399px] flex-col rounded-t-lg border-2 border-[#43608c] bg-[#ece9e2] shadow-[inset_2px_0_0_#7d93b8,inset_-2px_0_0_#7d93b8,inset_0_-2px_0_#9fb4d0]">
      <div className="flex h-[25px] items-center rounded-t-md border-b border-[#43608c] bg-linear-to-b from-[#94a6c8] to-[#5c76a2] pr-[4px] pl-1">
        <h2 className="flex-1 text-[15px] text-[#f4f1ea] [text-shadow:0_0_2px_#38506f]">Align and Distribute</h2>
        <button aria-label="Close dialog" className="flex h-[18px] w-[18px] items-center justify-center rounded border border-[#48618b] bg-[#ece9e2]">
          <svg viewBox="0 0 10 10" className="h-[10px] w-[10px]"><path d="M1.500 1.500l7 7M8.500 1.500l-7 7" stroke="#8e8b80" strokeWidth="2" /></svg>
        </button>
      </div>
      <div className="px-[4px] pt-2 pb-[5px]">
        <div className="flex items-end text-[13px]">
          <button className="ml-px h-[21px] w-[47px] rounded-t border border-b-0 border-[#aaa69f] bg-linear-to-b from-[#f8f6f2] to-[#e3e0da] pr-[5px]">Align</button>
          <button className="z-10 -mb-px h-6 w-[70px] rounded-t border border-t-2 border-b-0 border-[#aaa69f] border-t-[#7f95ba] bg-[#fbfbf7] pb-[2px]">Distribute</button>
        </div>
        <div className="mr-[2px] flex h-[179px] flex-col border border-[#aaa69f] bg-linear-to-b from-[#fbfaf6] to-[#f4f3ee] shadow-[1px_1px_0_#d0cdc7]">
          <div className="flex pt-[3px] pl-[122px]">
            {cols.map(([k, label, w, pos]) => (
              <div key={k} className={`flex flex-col gap-[9px] ${w}`}>
                <div className={pos}><DistIcon name={k} /></div>
                <Check label={label} value={!!state[k]} onChange={() => toggle(k)} />
              </div>
            ))}
          </div>
          <div className="flex">
            <div className="flex w-[133px] flex-col pl-[5px]">
              {rows.map(([k, label]) => (
                <div key={k} className="flex h-[30px] items-center gap-[10px]">
                  <div className="mb-1"><DistIcon name={k} /></div>
                  <Check label={label} value={!!state[k]} onChange={() => toggle(k)} />
                </div>
              ))}
            </div>
            <fieldset className="mt-4 h-[71px] w-[236px] rounded border border-[#c9c7c1] pl-[7px]">
              <legend className="px-px text-[13px] leading-[18px] text-[#4c4a46]">Distribute to</legend>
              <div className="flex flex-col gap-[4px] pt-[3px]">
                <Radio label="Extent of selection" defaultChecked />
                <Radio label="Extent of page" />
              </div>
            </fieldset>
          </div>
        </div>
        <div className="mt-3 flex justify-end gap-[6px] pr-[3px]">
          <button className={`h-[26px] w-[88px] ${buttonDefault}`}>Apply</button>
          <button className={`h-[26px] w-[88px] ${buttonFace}`}>Close</button>
        </div>
      </div>
    </div>
  );
}

const taskIcons = {
  folder: (
    <svg viewBox="0 0 20 16" className="h-4 w-5 shrink-0">
      <path d="M1 1.500h6l1.500 2H15v10H3z" fill="#f1b72c" stroke="#8f5f06" />
      <path d="M4 14.500L5.500 5H19l-2 9.500z" fill="#ffe88a" stroke="#b98613" />
    </svg>
  ),
  chrome: (
    <svg viewBox="0 0 20 20" className="h-5 w-5 shrink-0">
      <circle cx="10" cy="10" r="9.500" fill="#f7c82e" />
      <path d="M1.800 5.200A9.500 9.500 0 0118.500 6H10L6 12z" fill="#e0402f" />
      <path d="M1.800 5.200L7 14l3 .5-2 5A9.500 9.500 0 011.800 5.200z" fill="#2a9d55" />
      <circle cx="10" cy="10" r="4.700" fill="#fff" />
      <circle cx="10" cy="10" r="3.700" fill="#3f7fe0" />
    </svg>
  ),
  pencil: (
    <svg viewBox="0 0 20 20" className="h-5 w-5 shrink-0">
      <path d="M0 0h20v20H0z" fill="#74bb1b" />
      <path d="M1 2l4-1 12 11 2 6-6-1z" fill="#fff" />
      <path d="M3 4l11 12M6 2l10 11" stroke="#74bb1b" />
    </svg>
  ),
  corel: <Logo />,
};

const tasks = [
  ["folder", "C:\\Program F..."], ["folder", "C:\\1"], ["folder", "C:\\aiscript\\Do..."], ["folder", "D:\\Documen..."],
  ["chrome", "(2) [X5] - Вы..."], ["pencil", "CorelDRAW X..."], ["corel", "CorelDRAW X..."],
];

function Taskbar() {
  return (
    <footer className="flex h-[29px] shrink-0 items-center border-t-2 border-[#3e5477] bg-linear-to-b from-[#93a7ca] to-[#5f77a3] pr-[3px] text-[14px] text-white [text-shadow:0_1px_2px_#3b4f73]">
      <button aria-label="Start" className="flex w-[70px] shrink-0 justify-center">
        <svg viewBox="0 0 18 16" className="h-4 w-[18px]" fill="#8092ae" stroke="#3f4f6c"><path d="M3 1c2-1 4-1 5.500 0l-1 6c-2-1-4-1-5.500 0zM10 1.500c2 1 4 1 6 0l-1 6c-2 1-4 1-6 0zM2 8.500c2-1 4-1 5.500 0l-1 6c-2-1-4-1-5.500 0zM9 9c2 1 4 1 6 0l-1 6c-2 1-4 1-6 0z" /></svg>
      </button>
      <div className="flex min-w-0 flex-1 gap-1">
        {tasks.map(([icon, label], i) => (
          <button
            key={i}
            className={`flex h-[23px] w-[136px] min-w-0 items-center gap-1 pl-2 whitespace-nowrap ${i === 6 ? "rounded-md border border-[#3c5176] bg-linear-to-b from-[#5e759f] to-[#7288b0]" : ""}`}
          >
            {taskIcons[icon]}
            {label}
          </button>
        ))}
      </div>
      <span className="mr-[6px] bg-[#4d658f] px-[1px] leading-5">EN</span>
      <div className="flex h-[25px] w-[195px] shrink-0 items-center gap-[2px] rounded-md border border-[#3c5176] bg-linear-to-b from-[#5a719c] to-[#8296bb] pl-[6px]">
        <svg viewBox="0 0 20 20" className="h-5 w-5"><path d="M0 0h20v20H0z" fill="#f5efec" /><path d="M3 16c4-3 6-7 6-13 2 6 4 8 8 9-5-1-9 0-14 4z" fill="none" stroke="#d8232a" strokeWidth="1.500" /></svg>
        <svg viewBox="0 0 20 20" className="h-5 w-5"><path d="M7 0h6v4h6v5h-3v4h3v3h-6v4H7v-4H1v-3h3V9H1V4h6z" fill="#3db32b" /><circle cx="10" cy="9" r="5.500" fill="#f7e42b" /><path d="M7.500 8h1M11.500 8h1M7 11c2 2 4 2 6 0" fill="none" stroke="#333" strokeWidth="1.300" /></svg>
        <svg viewBox="0 0 20 20" className="h-5 w-5"><path d="M2 7h3l7-6v18l-7-6H2z" fill="#d2552f" stroke="#6b1f0d" /><path d="M14.500 4c2 3 2 9 0 12M17.500 2c2 4 2 12 0 16" fill="none" stroke="#c9502d" strokeWidth="1.500" /></svg>
        <svg viewBox="0 0 20 20" className="h-5 w-5"><path d="M0 0h20v20H0z" fill="#e01515" /><path d="M12 0L5 11h4l-2 9 8-12h-4z" fill="#fff" /><path d="M4 4L2 9l3 5M16 5l2 5-3 6" fill="none" stroke="#fff" strokeWidth="2" /></svg>
        <svg viewBox="0 0 20 20" className="h-5 w-5"><path d="M0 4h20v12H0z" fill="#6fb222" /><path d="M2 10c3-5 10-5 13 0-3 4-8 4-10 0 2-3 6-3 7 0-1 2-3 2-4 0" fill="none" stroke="#c6e79b" /></svg>
        <svg viewBox="0 0 20 20" className="h-5 w-5"><path d="M2 7h4l5-5v15l-5-5H2z" fill="#55595f" stroke="#26292e" /><path d="M12 5c2 2 2 6 0 8" stroke="#333" fill="none" /><circle cx="14" cy="14" r="4.500" fill="#e2432d" stroke="#fff" /><path d="M11.500 11.500l5 5" stroke="#fff" strokeWidth="1.500" /></svg>
        <time className="flex-1 pr-[10px] text-right">12:50</time>
      </div>
    </footer>
  );
}

export default function App() {
  return (
    <div className="relative flex min-h-screen flex-col overflow-hidden bg-[#ece9e2] font-['DejaVu_Sans_Condensed','Noto_Sans',sans-serif] text-black">
      <svg className="absolute h-0 w-0" aria-hidden="true">
        <defs>
          <linearGradient id="lav" x1="0" y1="0" x2="1" y2="1">
            <stop offset="0.1" stopColor="#fff" />
            <stop offset="1" stopColor="#8080be" />
          </linearGradient>
          <linearGradient id="grid" x1="0" y1="0" x2="0" y2="1">
            <stop offset="0" stopColor="#ececff" />
            <stop offset="0.550" stopColor="#8b8bc4" />
            <stop offset="1" stopColor="#ececff" />
          </linearGradient>
          <radialGradient id="ball" cx="0.5" cy="0.7" r="0.7">
            <stop offset="0" stopColor="#8fe03c" />
            <stop offset="1" stopColor="#0b5d14" />
          </radialGradient>
        </defs>
      </svg>
      <TitleBar />
      <StatusBar />
      <ColorBar />
      <MenuBar />
      <StandardBar />
      <PropertyBar />
      <div className="flex flex-1 pt-[2px]">
        <Toolbox />
        <Workspace />
        <Docker />
      </div>
      <Taskbar />
      <AlignDialog />
    </div>
  );
}
